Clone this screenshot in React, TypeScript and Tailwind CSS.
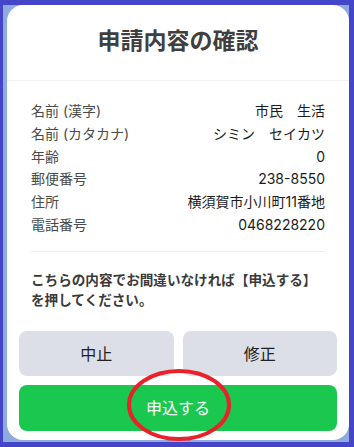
import React from "react"

const rows: [string, string][] = [
  ["名前 (漢字)", "市民　生活"],
  ["名前 (カタカナ)", "シミン　セイカツ"],
  ["年齢", "0"],
  ["郵便番号", "238-8550"],
  ["住所", "横須賀市小川町11番地"],
  ["電話番号", "0468228220"],
]

const font = {
  fontFamily: 'Inter, "Noto Sans CJK JP", "Noto Sans", sans-serif',
}

export default function App() {
  return (
    <div className="w-[354px] h-[447px] bg-[#4545c9] pt-[5px] pl-[3px] pr-[5px] pb-[5px]" style={font}>
      <div className="h-full bg-[#8dabdf] pl-[4px] pb-[2px]">
        <div className="relative h-full bg-white rounded-[16px] flex flex-col">
          <div className="h-[76px] shrink-0 border-b border-[#f1f1f3] flex items-center justify-center">
            <h1 className="text-[23px] font-bold text-[#3f3f3f] -mt-[3px]">申請内容の確認</h1>
          </div>

          <div className="px-[24px] pt-[19px]">
            {rows.map(([label, value]) => (
              <div key={label} className="flex justify-between text-[14px] leading-[22.8px]">
                <span className="text-[#4a4a4a]">{label}</span>
                <span className="text-[#1c1c1c]">{value}</span>
              </div>
            ))}
            <div className="mt-[14px] border-t border-[#efefef]" />
            <p className="mt-[18px] text-[13.6px] leading-[20px] font-bold text-[#3a3a3a]">
              こちらの内容でお間違いなければ【申込する】<br />を押してください。
            </p>
          </div>

          <div className="mt-auto px-[12px] pb-[9px] flex flex-col gap-[9px]">
            <div className="flex gap-[9px]">
              <button className="flex-1 h-[45px] rounded-[8px] bg-[#dcdfe8] text-[16px] text-[#222]">中止</button>
              <button className="flex-1 h-[45px] rounded-[8px] bg-[#dcdfe8] text-[16px] text-[#222]">修正</button>
            </div>
            <button className="h-[46px] rounded-[8px] bg-[#1ac850] text-[16px] text-white">申込する</button>
          </div>

          <svg
            className="absolute pointer-events-none"
            style={{ left: 118, top: 360 }}
            width="112"
            height="80"
            viewBox="0 0 112 80"
          >
            <ellipse cx="54" cy="40" rx="50" ry="34" fill="none" stroke="#e8212b" strokeWidth="4" />
          </svg>
        </div>
      </div>
    </div>
  )
}
